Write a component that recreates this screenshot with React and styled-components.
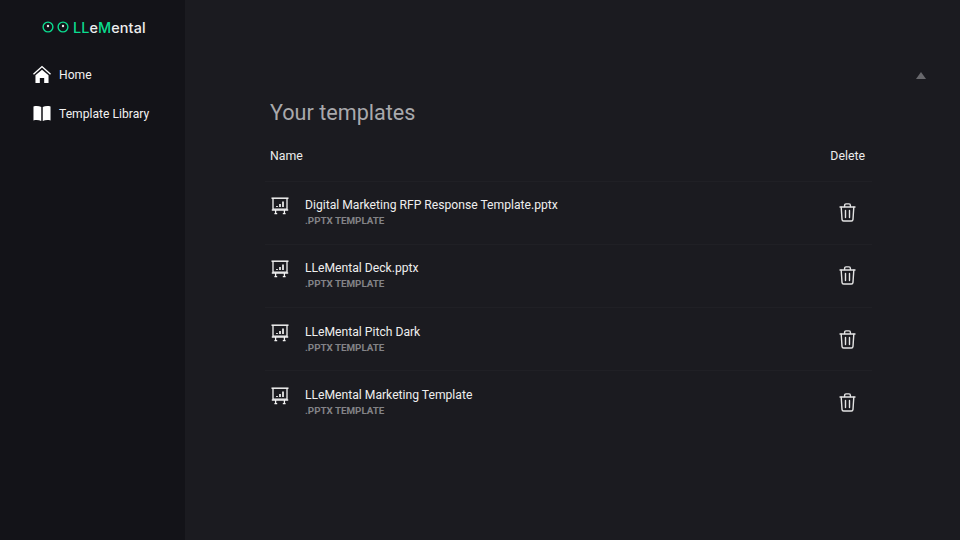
import React from 'react'
import styled, { createGlobalStyle } from 'styled-components'

const GlobalStyle = createGlobalStyle`
  html, body {
    margin: 0;
    padding: 0;
    background: #1b1b20;
    font-family: Roboto, "Noto Sans", sans-serif;
    overflow: hidden;
  }
`

const templates = [
  'Digital Marketing RFP Response Template.pptx',
  'LLeMental Deck.pptx',
  'LLeMental Pitch Dark',
  'LLeMental Marketing Template',
]

const HomeIcon = () => (
  <svg width="19" height="19" viewBox="0 0 19 19" fill="#fff">
    <path d="M9.5 2.2 1 9.8 0 8.7 9.5 0.2 19 8.7 18 9.8Z" />
    <path d="M9.5 4.4 16.4 10.4V18.6H11.8V13.2H7.2V18.6H2.6V10.4Z" />
  </svg>
)

const BookIcon = () => (
  <svg width="19" height="17" viewBox="0 0 19 17" fill="#fff">
    <path d="M0.5 1C3.4 0.3 6.6 0.5 8.7 1.7V16.4C6.6 15.4 3.4 15.2 0.5 15.8Z" />
    <path d="M18.5 1C15.6 0.3 12.4 0.5 10.3 1.7V16.4C12.4 15.4 15.6 15.2 18.5 15.8Z" />
  </svg>
)

const EyeIcon = () => (
  <svg width="12" height="12" viewBox="0 0 12 12" fill="none">
    <circle cx="6" cy="6" r="4.9" stroke="#0bdc8f" strokeWidth="1.4" />
    <circle cx="6" cy="5" r="1.2" fill="#e8e8e8" />
  </svg>
)

const SlideIcon = () => (
  <svg width="18" height="18" viewBox="0 0 18 18" fill="none" stroke="#f2f2f2" strokeWidth="1.3">
    <path d="M0.5 1.2H17.5" strokeWidth="1.5" />
    <path d="M2 1.2V12.2H16V1.2" />
    <path d="M0.8 13H17.2" strokeWidth="1.5" />
    <path d="M4.6 13V17M13.4 13V17M3.4 16.6H6.2M11.8 16.6H14.6" />
    <path d="M6 10V9M9 10V7M12 10V4.6" strokeWidth="1.7" />
  </svg>
)

const TrashIcon = () => (
  <svg width="17" height="19" viewBox="0 0 17 19" fill="none" stroke="#e4e4e4" strokeWidth="1.4" strokeLinecap="round" strokeLinejoin="round">
    <path d="M1 4H16" />
    <path d="M5.6 3.6V2.4C5.6 1.4 6.2 0.9 7 0.9H10C10.8 0.9 11.4 1.4 11.4 2.4V3.6" />
    <path d="M2.2 4.2 3 16.4C3.1 17.4 3.7 18 4.6 18H12.4C13.3 18 13.9 17.4 14 16.4L14.8 4.2" />
    <path d="M6.5 7.4V14.6M10.5 7.4V14.6" />
  </svg>
)

const Page = styled.div`
  display: flex;
  width: 960px;
  height: 540px;
  overflow: hidden;
`

const Sidebar = styled.aside`
  width: 185px;
  flex-shrink: 0;
  background: #131318;
  padding: 20px 0 0 33px;
  box-sizing: border-box;
`

const Logo = styled.div`
  display: flex;
  align-items: center;
  gap: 3px;
  margin-left: 9px;
  height: 14px;
  margin-bottom: 30px;
`

const LogoText = styled.span`
  margin-left: 1px;
  font-family: "Inter", sans-serif;
  font-size: 14.4px;
  font-weight: 500;
  letter-spacing: 0.1px;
  color: #eeeeee;
`

const Accent = styled.span`
  color: #0bdc8f;
`

const NavItem = styled.div`
  display: flex;
  align-items: center;
  gap: 8px;
  height: 20px;
  margin-bottom: 19px;
`

const NavLabel = styled.span`
  padding-top: 2px;
  font-size: 12.1px;
  letter-spacing: 0.02px;
  color: #f2f2f2;
`

const NavIcon = styled.span`
  display: flex;
  width: 18px;
  justify-content: center;
`

const Main = styled.main`
  position: relative;
  flex: 1;
  background: #1b1b20;
  padding: 99px 0 0 80px;
  box-sizing: border-box;
`

const ScrollArrow = styled.div`
  position: absolute;
  top: 72px;
  left: 731px;
  width: 0;
  height: 0;
  border-left: 5px solid transparent;
  border-right: 5px solid transparent;
  border-bottom: 7px solid #68686c;
`

const Title = styled.h1`
  margin: 0 0 17px 5px;
  font-size: 21.6px;
  line-height: 28px;
  font-weight: 400;
  color: #a9a9ac;
`

const Table = styled.div`
  width: 607px;
`

const HeaderRow = styled.div`
  display: flex;
  justify-content: space-between;
  height: 37.5px;
  padding: 4px 7px 0 5px;
  box-sizing: border-box;
  font-size: 12.3px;
  line-height: 17px;
  color: #ececec;
  border-bottom: 1px solid #202025;
`

const Row = styled.div`
  display: flex;
  align-items: center;
  height: 63.3px;
  padding: 1px 16px 0 6px;
  box-sizing: border-box;
  border-bottom: 1px solid #202025;

  &:last-child {
    border-bottom-color: transparent;
  }
`

const RowIcon = styled.div`
  display: flex;
  width: 18px;
  margin-right: 16px;
  margin-top: -14px;
`

const RowText = styled.div`
  flex: 1;
  margin-top: -1px;
`

const FileName = styled.div`
  font-size: 12.15px;
  line-height: 17px;
  color: #eeeeee;
`

const FileType = styled.div`
  margin-top: -1px;
  font-size: 9.8px;
  line-height: 15px;
  font-weight: 700;
  color: #838387;
`

const DeleteButton = styled.button`
  display: flex;
  margin-top: -1.4px;
  padding: 0;
  border: none;
  background: none;
  cursor: pointer;
`

export default function App() {
  return (
    <Page>
      <GlobalStyle />
      <Sidebar>
        <Logo>
          <EyeIcon />
          <EyeIcon />
          <LogoText>
            <Accent>LL</Accent>e<Accent>M</Accent>ental
          </LogoText>
        </Logo>
        <NavItem>
          <NavIcon><HomeIcon /></NavIcon>
          <NavLabel>Home</NavLabel>
        </NavItem>
        <NavItem>
          <NavIcon><BookIcon /></NavIcon>
          <NavLabel>Template Library</NavLabel>
        </NavItem>
      </Sidebar>
      <Main>
        <ScrollArrow />
        <Title>Your templates</Title>
        <Table>
          <HeaderRow>
            <span>Name</span>
            <span>Delete</span>
          </HeaderRow>
          {templates.map((name) => (
            <Row key={name}>
              <RowIcon><SlideIcon /></RowIcon>
              <RowText>
                <FileName>{name}</FileName>
                <FileType>.PPTX TEMPLATE</FileType>
              </RowText>
              <DeleteButton aria-label="Delete"><TrashIcon /></DeleteButton>
            </Row>
          ))}
        </Table>
      </Main>
    </Page>
  )
}
